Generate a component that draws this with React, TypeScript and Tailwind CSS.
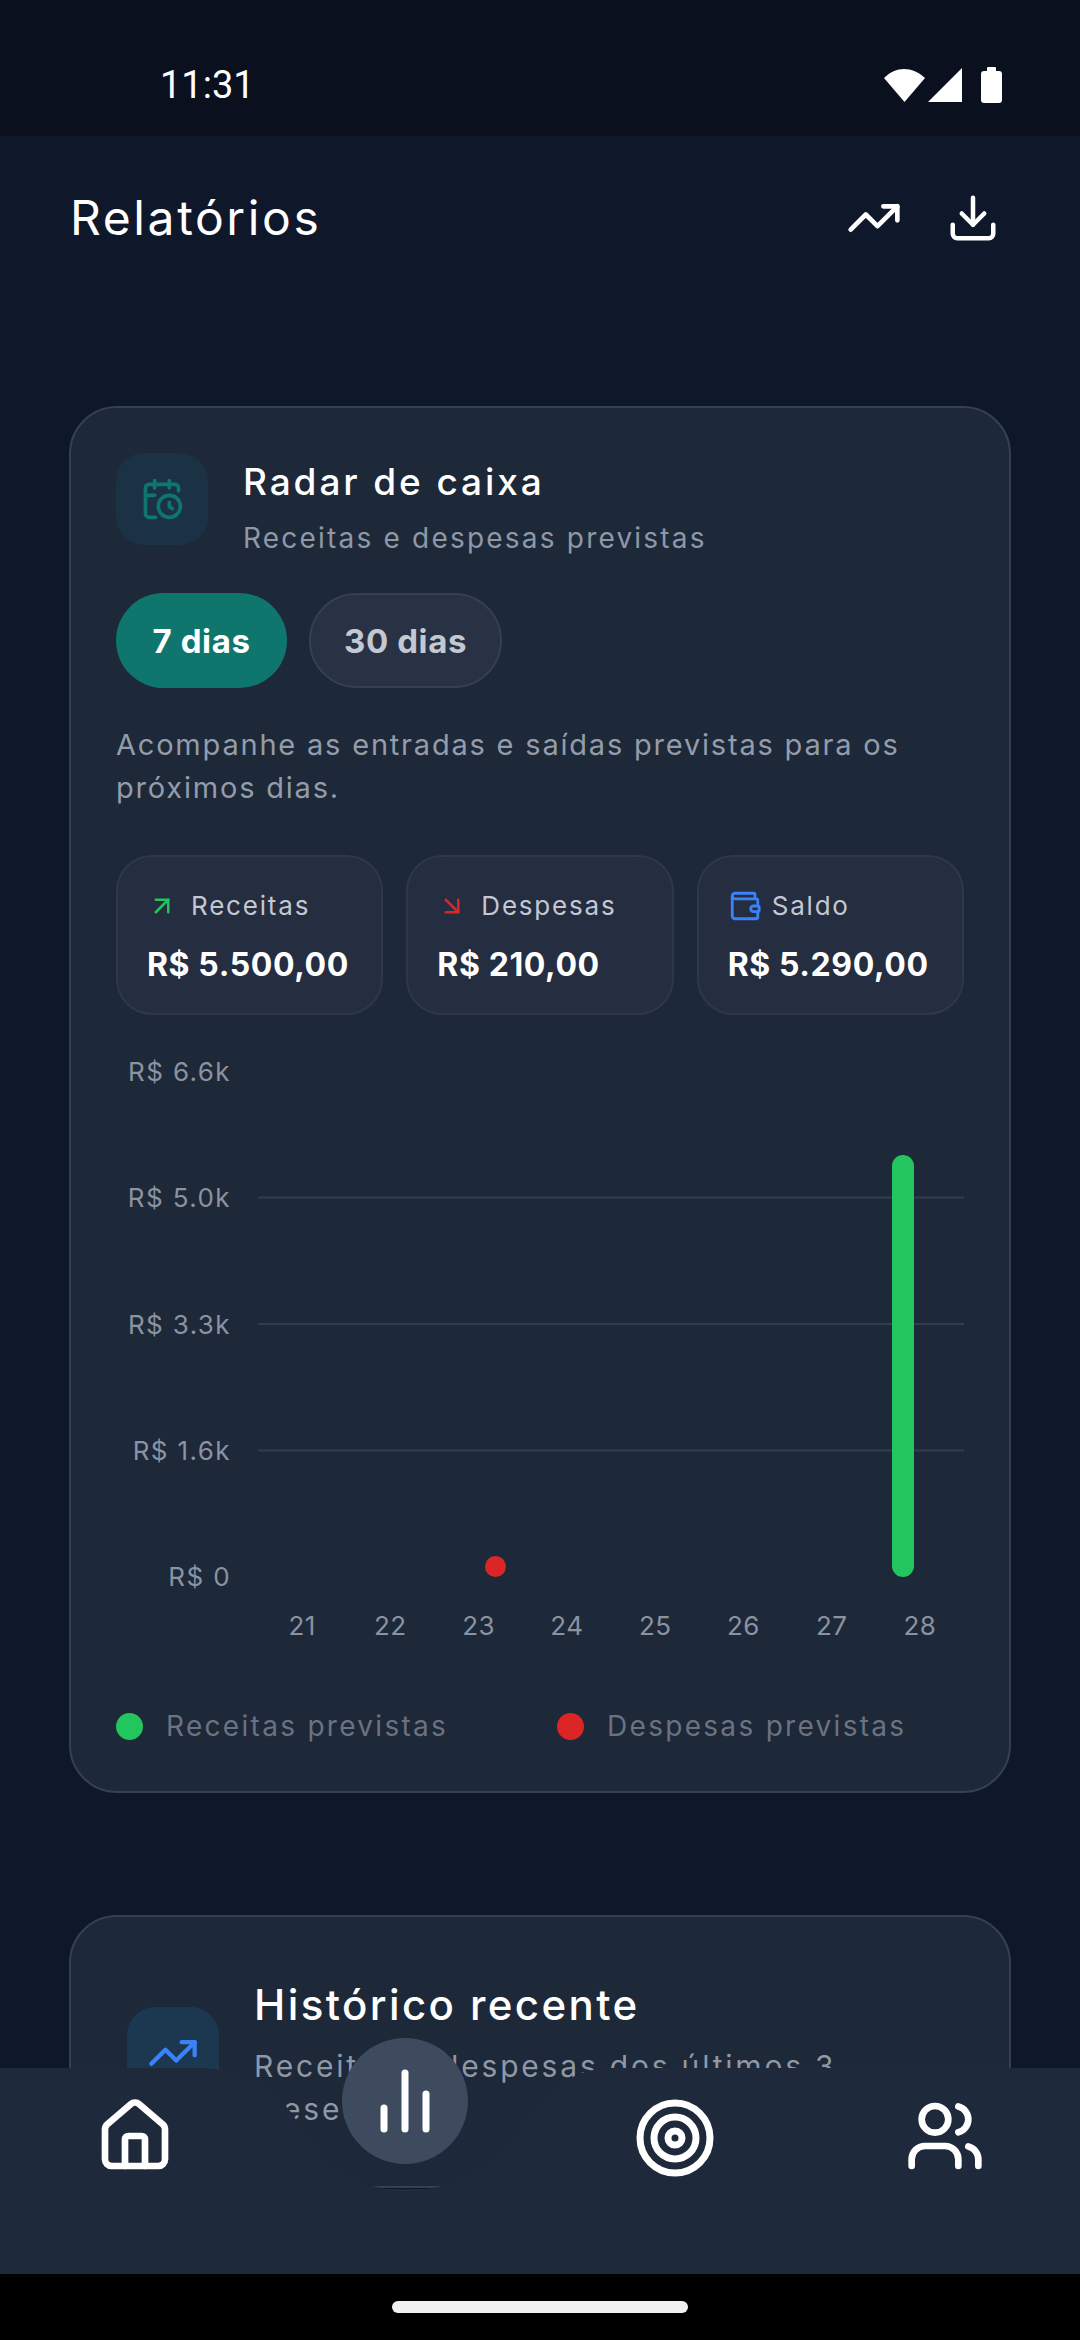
import React from "react";
import { TrendingUp, Download, CalendarClock, ArrowUpRight, ArrowDownRight, Wallet, House, Target, Users } from "lucide-react";

const yLabels = ["R$ 6.6k", "R$ 5.0k", "R$ 3.3k", "R$ 1.6k", "R$ 0"];
const days = ["21", "22", "23", "24", "25", "26", "27", "28"];

function Stat({ icon, label, value, gap }: { icon: React.ReactNode; label: string; value: string; gap: string }) {
  return (
    <div className="h-[160px] rounded-[36px] border-2 border-[#2e384c] bg-[#252d41] pl-[29px] pt-[31px]">
      <div className={`flex h-[36px] items-center ${gap}`}>
        {icon}
        <span className="text-[26px] leading-[36px] tracking-[1.8px] text-[#c3c8d1]">{label}</span>
      </div>
      <div className="mt-[19px] text-[32px] font-bold leading-[44px] tracking-[0.6px] text-white">{value}</div>
    </div>
  );
}

export default function App() {
  return (
    <div className="relative h-[2340px] w-[1080px] overflow-hidden bg-[#0f172a] font-['Inter',sans-serif] text-white">
      <div className="flex h-[136px] items-center justify-between bg-[#0a101e] pl-[160px] pr-[76px] pt-[33px]">
        <span className="font-['Roboto',sans-serif] text-[38px] leading-none">11:31</span>
        <svg width="122" height="36" viewBox="0 0 122 36" fill="white">
          <path d="M2 11 C14 -1 30 -1 43 11 L22.500 35 Z" />
          <path d="M46 35 L80 1 V35 Z" />
          <rect x="99" y="4" width="21" height="32" rx="3" />
          <rect x="105" y="0" width="9" height="6" rx="1" />
        </svg>
      </div>

      <header className="flex h-[164px] items-center justify-between pl-[70px] pr-[80px]">
        <h1 className="text-[48px] font-normal leading-none tracking-[2.6px]">Relatórios</h1>
        <div className="flex items-center gap-[44px]">
          <TrendingUp size={56} strokeWidth={2} />
          <Download size={54} strokeWidth={2} />
        </div>
      </header>

      <main className="mt-[106px] px-[69px]">
        <section className="rounded-[48px] border-2 border-[#334155] bg-[#1d2839] pb-[45px] pl-[45px] pr-[45px] pt-[45px]">
          <div className="flex items-start gap-[35px]">
            <div className="flex h-[92px] w-[92px] items-center justify-center rounded-[28px] bg-[#1b3244]">
              <CalendarClock size={44} strokeWidth={2} className="text-[#0f766e]" />
            </div>
            <div className="pt-px">
              <h2 className="text-[37px] font-medium leading-[56px] tracking-[2.9px] text-white">Radar de caixa</h2>
              <p className="mt-[6px] text-[28px] leading-[44px] tracking-[2.2px] text-[#8f98a6]">Receitas e despesas previstas</p>
            </div>
          </div>

          <div className="mt-[33px] flex gap-[22px]">
            <button className="flex h-[95px] w-[171px] items-center justify-center rounded-full bg-[#0f766e] pt-[3px] text-[33px] font-bold tracking-[0.6px] text-white">7 dias</button>
            <button className="flex h-[95px] w-[193px] items-center justify-center rounded-full border-2 border-[#334155] bg-[#293245] pt-[3px] text-[33px] font-bold tracking-[0.6px] text-[#c3c8d1]">30 dias</button>
          </div>

          <p className="mt-[35px] text-[29px] leading-[43px] tracking-[1.8px] text-[#949ca9]">
            Acompanhe as entradas e saídas previstas para os próximos dias.
          </p>

          <div className="mt-[46px] grid grid-cols-3 gap-[23px]">
            <Stat gap="gap-[14px]" label="Receitas" value="R$ 5.500,00" icon={<ArrowUpRight size={30} strokeWidth={2} className="text-[#22c55e]" />} />
            <Stat gap="gap-[14px]" label="Despesas" value="R$ 210,00" icon={<ArrowDownRight size={30} strokeWidth={2} className="text-[#dc2626]" />} />
            <Stat gap="gap-[10px]" label="Saldo" value="R$ 5.290,00" icon={<Wallet size={34} strokeWidth={2} className="text-[#3b82f6]" />} />
          </div>

          <div className="mt-[37px] flex gap-[27px]">
            <div className="flex h-[545px] w-[115px] flex-col justify-between text-right">
              {yLabels.map((l) => (
                <span key={l} className="text-[26px] leading-[40px] tracking-[1.4px] text-[#8b92a0]">{l}</span>
              ))}
            </div>
            <svg width="706" height="545" viewBox="0 0 706 545">
              {[145.5, 272, 398.5].map((y) => (
                <line key={y} x1="0" x2="706" y1={y} y2={y} stroke="#313c4f" strokeWidth="2" />
              ))}
              <rect x="634" y="103" width="22" height="422" rx="11" fill="#22c55e" />
              <circle cx="237.500" cy="514.500" r="10.500" fill="#dc2626" />
            </svg>
          </div>

          <div className="ml-[142px] mt-[9px] flex">
            {days.map((d) => (
              <span key={d} className="flex-1 text-center text-[26px] leading-[40px] tracking-[0.4px] text-[#8b92a0]">{d}</span>
            ))}
          </div>

          <div className="mt-[60px] flex h-[40px] items-center">
            <span className="h-[27px] w-[27px] rounded-full bg-[#22c55e]" />
            <span className="ml-[23px] w-[391px] text-[28px] leading-[40px] tracking-[2.3px] text-[#6b7280]">Receitas previstas</span>
            <span className="h-[27px] w-[27px] rounded-full bg-[#dc2626]" />
            <span className="ml-[23px] text-[28px] leading-[40px] tracking-[2.3px] text-[#6b7280]">Despesas previstas</span>
          </div>
        </section>

        <section className="mt-[122px] rounded-[48px] border-2 border-[#334155] bg-[#1d2839] pb-[55px] pl-[56px] pr-[55px] pt-[58px]">
          <div className="flex items-center gap-[35px]">
            <div className="flex h-[92px] w-[92px] shrink-0 items-center justify-center rounded-[28px] bg-[#1b3850]">
              <TrendingUp size={52} strokeWidth={2} className="text-[#3b82f6]" />
            </div>
            <div>
              <h2 className="text-[42px] font-medium leading-[60px] tracking-[2.4px] text-white">Histórico recente</h2>
              <p className="mt-[10px] w-[620px] text-[30px] leading-[43px] tracking-[2.8px] text-[#8f98a6]">Receitas e despesas dos últimos 3 meses</p>
            </div>
          </div>
        </section>
      </main>

      <nav className="absolute bottom-[66px] left-0 h-[206px] w-[1080px]">
        <svg className="absolute inset-0" width="1080" height="206" viewBox="0 0 1080 206">
          <path
            d="M0 0 H205 C255 5 280 25 298 55 C320 90 345 122 405 122 C470 122 500 90 525 55 C545 30 560 5 605 0 H1080 V206 H0 Z"
            fill="#1e293b"
          />
          <line x1="388" x2="422" y1="122" y2="122" stroke="#2b3649" strokeWidth="1" />
        </svg>
        <div className="relative grid grid-cols-4 pt-[28px]">
          <div className="flex justify-center"><House size={80} strokeWidth={2} /></div>
          <div />
          <div className="flex justify-center"><Target size={84} strokeWidth={2} /></div>
          <div className="flex justify-center"><Users size={80} strokeWidth={2} /></div>
        </div>
        <button className="absolute left-[342px] top-[-30px] flex h-[126px] w-[126px] items-center justify-center rounded-full bg-[#3e4a5e]">
          <svg width="84" height="84" viewBox="0 0 24 24" fill="none" stroke="white" strokeWidth="2" strokeLinecap="round">
            <path d="M6 20V14" />
            <path d="M12 20V4" />
            <path d="M18 20V10" />
          </svg>
        </button>
      </nav>

      <div className="absolute bottom-0 left-0 flex h-[66px] w-[1080px] items-center justify-center bg-black">
        <div className="h-[12px] w-[296px] rounded-full bg-[#f1f1f1]" />
      </div>
    </div>
  );
}
